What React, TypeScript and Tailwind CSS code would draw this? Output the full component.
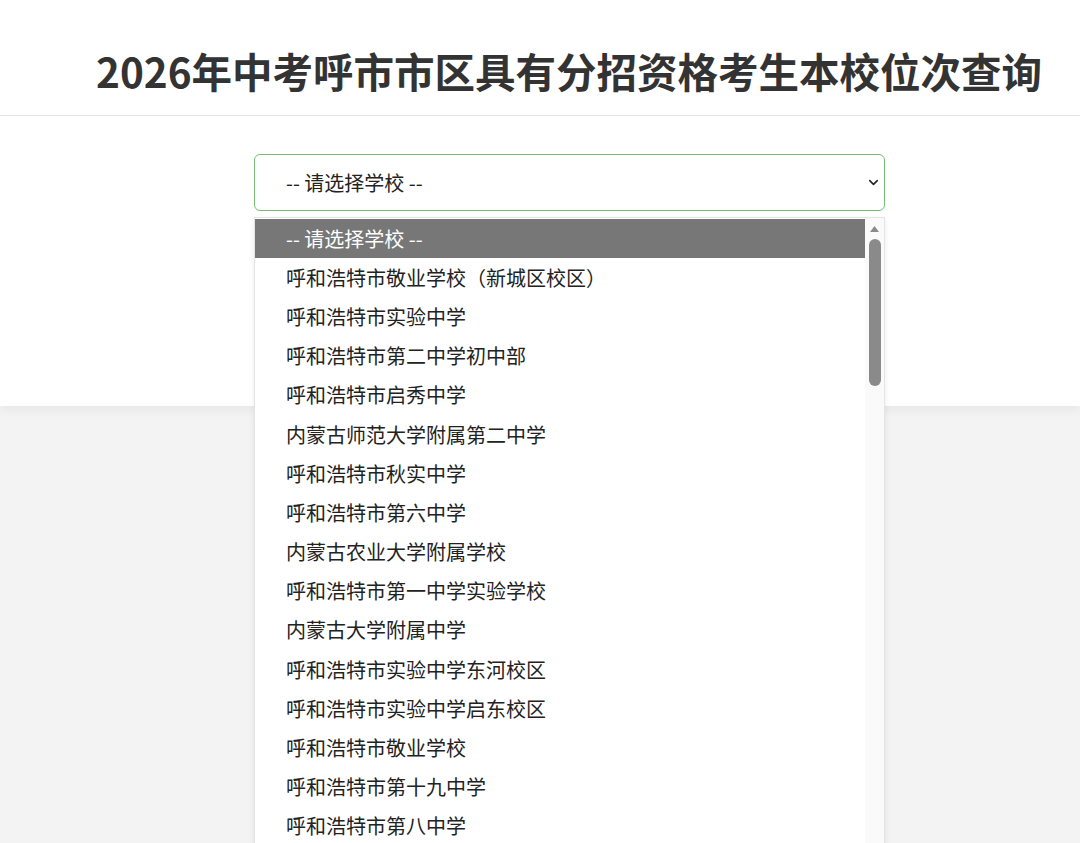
import { ChevronDown } from 'lucide-react'

const schools = [
  '-- 请选择学校 --',
  '呼和浩特市敬业学校（新城区校区）',
  '呼和浩特市实验中学',
  '呼和浩特市第二中学初中部',
  '呼和浩特市启秀中学',
  '内蒙古师范大学附属第二中学',
  '呼和浩特市秋实中学',
  '呼和浩特市第六中学',
  '内蒙古农业大学附属学校',
  '呼和浩特市第一中学实验学校',
  '内蒙古大学附属中学',
  '呼和浩特市实验中学东河校区',
  '呼和浩特市实验中学启东校区',
  '呼和浩特市敬业学校',
  '呼和浩特市第十九中学',
  '呼和浩特市第八中学',
]

const font = { fontFamily: '"Noto Sans CJK SC", "Noto Sans", sans-serif' }

export default function App() {
  return (
    <div className="h-[843px] overflow-hidden bg-[#f3f3f3] text-[#333]" style={font}>
      {/* Header */}
      <header className="h-[116px] bg-white border-b border-[#e6e6e6] flex items-center pl-[96px]">
        <h1 className="whitespace-nowrap text-[40.5px] font-bold leading-none text-[#333] pt-[40px] pb-[12px]">
          2026年中考呼市市区具有分招资格考生本校位次查询
        </h1>
      </header>

      {/* Query card */}
      <section className="relative h-[290px] bg-white shadow-[0_4px_10px_rgba(0,0,0,0.05)]">
        <div className="flex justify-center pt-[38px] pl-[59px]">
          <div className="relative w-[631px] h-[57px] rounded-[6px] border border-[#74bf74] bg-white flex items-center pl-[31px] pr-[3px]">
            <span className="flex-1 text-[20px] text-[#222]">-- 请选择学校 --</span>
            <ChevronDown className="w-[15px] h-[15px] text-[#222]" strokeWidth={2.5} />

            {/* Open option list */}
            <div className="absolute left-[-1px] top-[62px] w-[631px] h-[640px] bg-white border border-[#e4e4e4] shadow-[0_2px_6px_rgba(0,0,0,0.08)] flex z-10">
              <ul className="flex-1 pt-[1px]">
                {schools.map((s, i) => (
                  <li
                    key={s}
                    className={`h-[39.2px] flex items-center pl-[31px] text-[20px] whitespace-nowrap ${
                      i === 0 ? 'bg-[#777] text-white' : 'text-[#222]'
                    }`}
                  >
                    {s}
                  </li>
                ))}
              </ul>
              <div className="w-[19px] bg-[#fafafa] flex flex-col items-center pt-[8px]">
                <svg width="9" height="6" viewBox="0 0 9 6">
                  <path d="M0 6 L4.5 0 L9 6 Z" fill="#8a8a8a" />
                </svg>
                <div className="mt-[7px] w-[12px] h-[147px] rounded-full bg-[#8a8a8a]" />
              </div>
            </div>
          </div>
        </div>
      </section>
    </div>
  )
}
